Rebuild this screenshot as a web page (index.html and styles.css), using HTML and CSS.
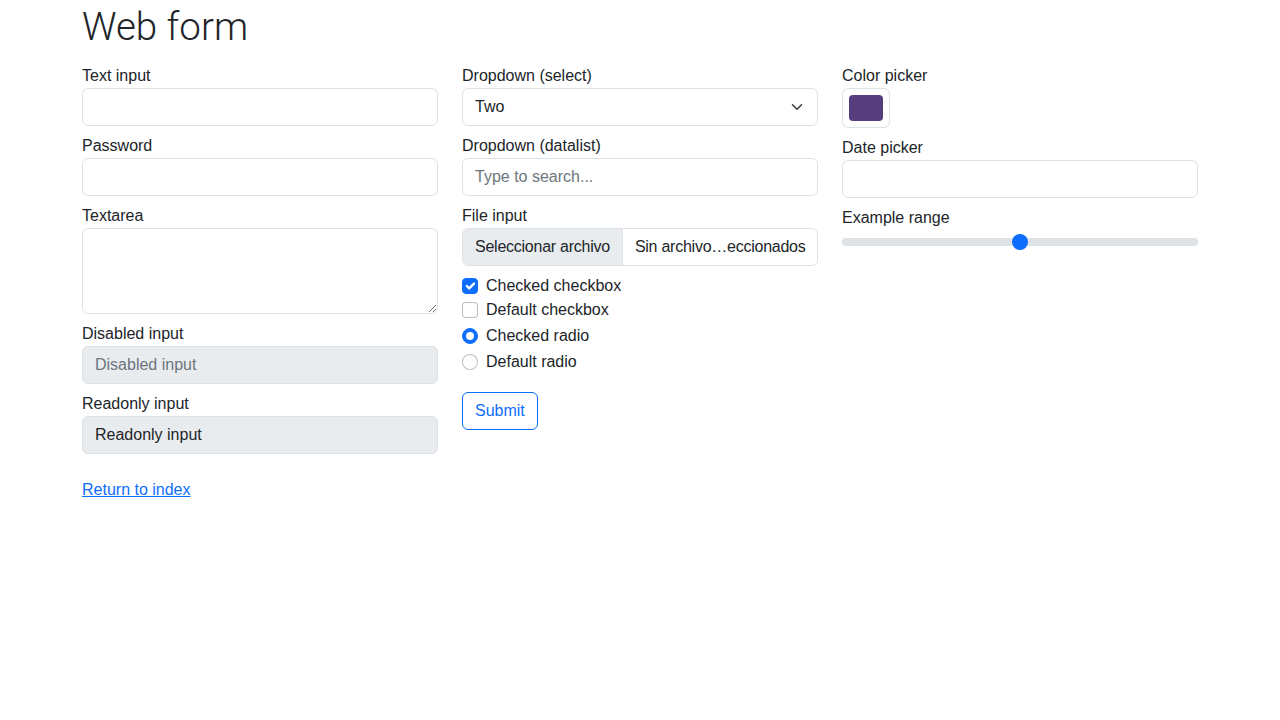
FILE: index.html
```html
<!DOCTYPE html>
<html lang="en">
<head>
<meta charset="utf-8">
<title>Web form</title>
<link rel="stylesheet" href="styles.css">
</head>
<body>
<div class="container">
  <h1 class="title">Web form</h1>
  <form class="form-grid" action="#">
    <div class="col">
      <label class="field">Text input
        <input class="control" type="text" name="my-text">
      </label>
      <label class="field">Password
        <input class="control" type="password" name="my-password">
      </label>
      <label class="field">Textarea
        <textarea class="control textarea" name="my-textarea" rows="3"></textarea>
      </label>
      <label class="field">Disabled input
        <input class="control control-grey" type="text" placeholder="Disabled input" disabled>
      </label>
      <label class="field">Readonly input
        <input class="control control-grey" type="text" value="Readonly input" readonly>
      </label>
    </div>
    <div class="col">
      <label class="field">Dropdown (select)
        <span class="control select">
          <span>Two</span>
          <svg class="chevron" width="16" height="12" viewBox="0 0 16 16"><path d="m2 5 6 6 6-6" fill="none" stroke="#343a40" stroke-width="2" stroke-linecap="round" stroke-linejoin="round"/></svg>
        </span>
      </label>
      <label class="field">Dropdown (datalist)
        <input class="control" type="text" placeholder="Type to search...">
      </label>
      <label class="field">File input
        <span class="control file">
          <span class="file-btn">Seleccionar archivo</span>
          <span class="file-name">Sin archivo…eccionados</span>
        </span>
      </label>
      <div class="checks">
        <label class="check">
          <span class="box box-checked">
            <svg width="16" height="16" viewBox="0 0 20 20"><path d="m6 10 3 3 6-6" fill="none" stroke="#fff" stroke-width="3" stroke-linecap="round" stroke-linejoin="round"/></svg>
          </span>
          Checked checkbox
        </label>
        <label class="check">
          <span class="box"></span>
          Default checkbox
        </label>
        <label class="check check-gap">
          <span class="box round box-checked">
            <svg width="16" height="16" viewBox="-4 -4 8 8"><circle r="2" fill="#fff"/></svg>
          </span>
          Checked radio
        </label>
        <label class="check check-gap">
          <span class="box round"></span>
          Default radio
        </label>
      </div>
      <button class="btn" type="button">Submit</button>
    </div>
    <div class="col">
      <label class="field">Color picker
        <span class="color-input"><span class="swatch"></span></span>
      </label>
      <label class="field">Date picker
        <input class="control" type="text" name="my-date">
      </label>
      <label class="field">Example range
        <input class="range" type="range" min="0" max="10" step="1" value="5">
      </label>
    </div>
  </form>
  <div class="footer">
    <a class="link" href="#">Return to index</a>
  </div>
</div>
</body>
</html>
```

FILE: styles.css
```css
* { box-sizing: border-box; }

body {
  margin: 0;
  font-family: "Liberation Sans", Arial, sans-serif;
  font-size: 16px;
  line-height: 1.5;
  color: #212529;
  background: #fff;
}

.container {
  width: 1140px;
  margin: 0 auto;
  padding: 0 12px;
}

.title {
  margin: 0 0 5px;
  padding-top: 3px;
  font-family: Roboto, "Liberation Sans", sans-serif;
  font-weight: 300;
  font-size: 38.5px;
  line-height: 48px;
}

.form-grid {
  display: grid;
  grid-template-columns: repeat(3, minmax(0, 1fr));
  column-gap: 24px;
  padding: 8px 0;
  margin: 0;
}

.col {
  min-width: 0;
}

.field {
  display: block;
  margin-bottom: 8px;
}

.control {
  display: block;
  width: 100%;
  height: 38px;
  margin: 0;
  padding: 6px 12px;
  font-family: inherit;
  font-size: 16px;
  line-height: 24px;
  color: #212529;
  background: #fff;
  border: 1px solid #dee2e6;
  border-radius: 6px;
  outline: none;
}

.control::placeholder {
  color: #6c757d;
  opacity: 1;
}

.textarea {
  height: 86px;
  resize: vertical;
}

.control-grey {
  background: #e9ecef;
}

.select {
  display: flex;
  align-items: center;
  justify-content: space-between;
}

.chevron {
  display: block;
  flex: none;
}

.file {
  display: flex;
  padding: 0;
  overflow: hidden;
  letter-spacing: -0.25px;
}

.file-btn {
  padding: 6px 12px;
  background: #e9ecef;
  border-right: 1px solid #dee2e6;
  white-space: nowrap;
}

.file-name {
  padding: 6px 12px;
  white-space: nowrap;
}

.checks {
  display: flex;
  flex-direction: column;
}

.check {
  display: flex;
  align-items: center;
  gap: 8px;
  height: 24px;
}

.check-gap {
  margin-top: 2px;
}

.box {
  display: block;
  flex: none;
  width: 16px;
  height: 16px;
  border: 1px solid rgba(0, 0, 0, 0.25);
  border-radius: 4px;
  background: #fff;
}

.box svg {
  display: block;
  margin: -1px;
}

.box.round {
  border-radius: 50%;
}

.box-checked {
  background: #0d6efd;
  border-color: #0d6efd;
}

.btn {
  display: inline-block;
  margin-top: 18px;
  padding: 6px 12px;
  font-family: inherit;
  font-size: 16px;
  line-height: 24px;
  color: #0d6efd;
  background: #fff;
  border: 1px solid #0d6efd;
  border-radius: 6px;
}

.color-input {
  display: block;
  width: 48px;
  height: 40px;
  padding: 6px;
  border: 1px solid #dee2e6;
  border-radius: 6px;
}

.swatch {
  display: block;
  width: 100%;
  height: 100%;
  background: #563d7c;
  border-radius: 4px;
}

.range {
  display: block;
  width: 100%;
  height: 24px;
  margin: 0;
  padding: 0;
  background: transparent;
  -webkit-appearance: none;
  appearance: none;
}

.range::-webkit-slider-runnable-track {
  height: 8px;
  background: #dee2e6;
  border-radius: 16px;
  border: 0;
}

.range::-webkit-slider-thumb {
  -webkit-appearance: none;
  appearance: none;
  width: 16px;
  height: 16px;
  margin-top: -4px;
  background: #0d6efd;
  border: 0;
  border-radius: 50%;
}

.footer {
  padding: 8px 0;
}

.link {
  color: #0d6efd;
  text-decoration: underline;
}
```
